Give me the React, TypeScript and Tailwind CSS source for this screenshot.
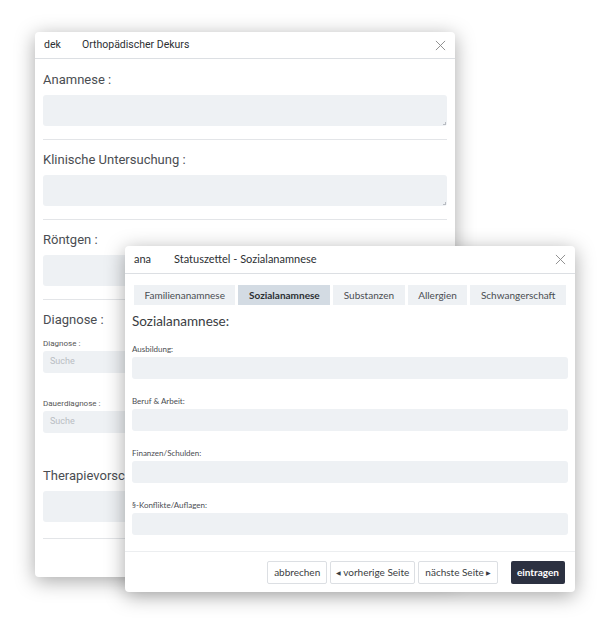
import React from "react";

const Close = ({ className }: { className?: string }) => (
  <svg viewBox="0 0 12 12" className={className} fill="none" stroke="currentColor" strokeWidth="1">
    <path d="M1 1 L11 11 M11 1 L1 11" />
  </svg>
);

const Section = ({ label }: { label: string }) => (
  <div className="pt-[12px] pb-[13px] border-b border-[#e3e5e8]">
    <div className="text-[13px] text-[#4a4d52] leading-[16px]">{label}</div>
    <div className="mt-[7px] h-[31px] rounded-[3px] bg-[#eef1f4] relative">
      <span className="absolute right-[1px] bottom-[1px] w-[3px] h-[3px] border-r border-b border-[#b8bcc2]" />
    </div>
  </div>
);

const SearchField = ({ label }: { label: string }) => (
  <div>
    <div className="text-[8px] text-[#555] leading-[10px]">{label}</div>
    <div className="mt-[2px] h-[22px] rounded-[3px] bg-[#eef1f4] px-[7px] flex items-center text-[9px] text-[#b9bdc3]">
      Suche
    </div>
  </div>
);

const Field = ({ label }: { label: string }) => (
  <div>
    <div className="text-[8px] text-[#4a4d52] leading-[10px]">{label}</div>
    <div className="mt-[3px] h-[22px] rounded-[3px] bg-[#eef1f4]" />
  </div>
);

const tabs = ["Familienanamnese", "Sozialanamnese", "Substanzen", "Allergien", "Schwangerschaft"];

export default function App() {
  return (
    <div className="relative w-[613px] h-[620px] bg-white overflow-hidden font-['Roboto',sans-serif]">
      {/* back window */}
      <div className="absolute left-[35px] top-[32px] w-[420px] h-[545px] bg-white rounded-[4px] shadow-[0_4px_20px_rgba(0,0,0,0.35)] flex flex-col">
        <div className="h-[27px] flex items-center px-[9px] border-b border-[#dcdfe3] text-[10.5px] text-[#2c2f33]">
          <span className="w-[38px]">dek</span>
          <span>Orthopädischer Dekurs</span>
          <Close className="ml-auto w-[11px] h-[11px] text-[#888]" />
        </div>
        <div className="px-[8px] pt-[1px]">
          <Section label="Anamnese :" />
          <Section label="Klinische Untersuchung :" />
          <Section label="Röntgen :" />
          <div className="pt-[12px]">
            <div className="text-[13px] text-[#4a4d52] leading-[16px]">Diagnose :</div>
            <div className="flex flex-col gap-[26px] mt-[11px]">
              <SearchField label="Diagnose :" />
              <SearchField label="Dauerdiagnose :" />
            </div>
          </div>
          <div className="pt-[35px] pb-[16px] border-b border-[#e3e5e8]">
            <div className="text-[13px] text-[#4a4d52] leading-[16px]">Therapievorschlag :</div>
            <div className="mt-[7px] h-[31px] rounded-[3px] bg-[#eef1f4]" />
          </div>
        </div>
      </div>

      {/* front window */}
      <div className="absolute left-[125px] top-[246px] w-[450px] h-[346px] bg-white rounded-[4px] shadow-[0_4px_20px_rgba(0,0,0,0.35)] flex flex-col font-['Lato',sans-serif]">
        <div className="h-[28px] flex items-center px-[9px] border-b border-[#dcdfe3] text-[11px] text-[#2c2f33]">
          <span className="w-[40px]">ana</span>
          <span>Statuszettel - Sozialanamnese</span>
          <Close className="ml-auto w-[11px] h-[11px] text-[#888]" />
        </div>
        <div className="px-[7px] pt-[11px] flex-1">
          <div className="flex gap-[3px] px-[2px]">
            {tabs.map((t) => (
              <div
                key={t}
                className={`h-[20px] flex-auto px-[3px] flex items-center justify-center text-[10px] ${
                  t === "Sozialanamnese" ? "bg-[#d3dbe3] font-bold text-[#2c2f33]" : "bg-[#eef1f4] text-[#4a4d52]"
                }`}
              >
                {t}
              </div>
            ))}
          </div>
          <div className="text-[13.5px] text-[#3a3d42] mt-[8px] leading-[16px]">Sozialanamnese:</div>
          <div className="mt-[15px] flex flex-col gap-[17px]">
            <Field label="Ausbildung:" />
            <Field label="Beruf & Arbeit:" />
            <Field label="Finanzen/Schulden:" />
            <Field label="§-Konflikte/Auflagen:" />
          </div>
        </div>
        <div className="h-[41px] border-t border-[#eceef0] flex items-center justify-end pr-[10px] gap-[3px] text-[10px] text-[#3a3d42]">
          <div className="h-[23px] px-[6px] border border-[#dcdfe3] rounded-[2px] flex items-center">abbrechen</div>
          <div className="h-[23px] px-[5px] border border-[#dcdfe3] rounded-[2px] flex items-center gap-[2px]">
            <span className="text-[6px]">◀</span>vorherige Seite
          </div>
          <div className="h-[23px] px-[6px] border border-[#dcdfe3] rounded-[2px] flex items-center gap-[2px]">
            nächste Seite<span className="text-[6px]">▶</span>
          </div>
          <div className="ml-[10px] h-[23px] px-[6px] rounded-[2px] bg-[#2c3141] text-white font-bold flex items-center">
            eintragen
          </div>
        </div>
      </div>
    </div>
  );
}
